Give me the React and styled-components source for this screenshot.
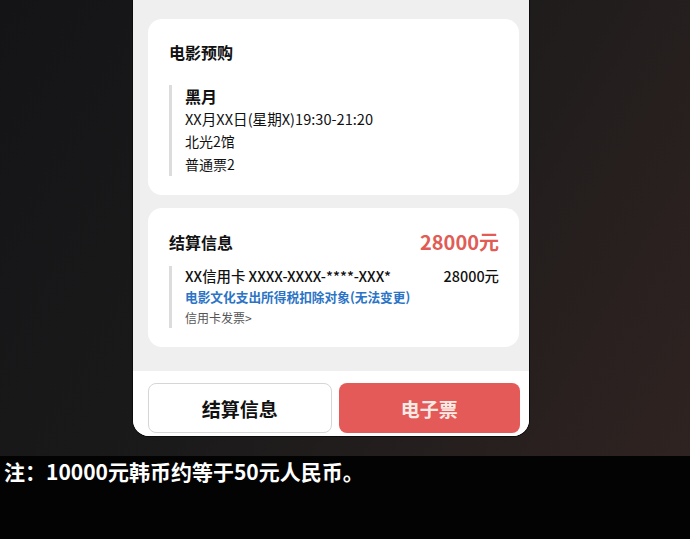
import React from "react";
import styled, { createGlobalStyle } from "styled-components";

const Global = createGlobalStyle`
  html, body { margin: 0; padding: 0; background: #000; }
  body { font-family: "Noto Sans CJK SC", "Noto Sans", sans-serif; }
`;

const Stage = styled.div`
  height: 456px;
  background: linear-gradient(120deg, #141416 0%, #1b1a1b 45%, #2f2321 100%);
  display: flex;
  overflow: hidden;
`;

const Phone = styled.div`
  width: 396px;
  height: 436px;
  margin-left: 133px;
  background: #efefef;
  border-radius: 0 0 16px 16px;
  display: flex;
  flex-direction: column;
  overflow: hidden;
  box-shadow: 0 0 0 1px #0c0c0c;
`;

const Content = styled.div`
  padding: 19px 10px 0 15px;
  display: flex;
  flex-direction: column;
  gap: 13px;
`;

const Card = styled.div`
  background: #fff;
  border-radius: 14px;
  height: ${(p) => p.$h}px;
  box-sizing: border-box;
  padding: ${(p) => p.$pt}px 20px 0 21px;
`;

const Title = styled.div`
  font-size: 16px;
  font-weight: 700;
  line-height: 22px;
  color: #111;
`;

const HeadRow = styled.div`
  display: flex;
  justify-content: space-between;
  align-items: center;
  height: 28px;
`;

const Price = styled.div`
  font-size: 20px;
  font-weight: 700;
  color: #e05c54;
  line-height: 28px;
`;

const Detail = styled.div`
  margin-top: ${(p) => p.$mt}px;
  border-left: 3px solid #dcdcdc;
  padding-left: 13px;
`;

const Line = styled.div`
  font-size: ${(p) => p.$size || 14}px;
  font-weight: ${(p) => p.$weight || 400};
  line-height: ${(p) => p.$lh || 23}px;
  color: ${(p) => p.$color || "#111"};
  display: flex;
  justify-content: space-between;
  white-space: nowrap;
`;

const Footer = styled.div`
  margin-top: auto;
  background: #fff;
  height: 65px;
  box-sizing: border-box;
  padding: 12px 9px 3px 15px;
  display: flex;
  gap: 7px;
`;

const Button = styled.button`
  flex: 1 1 0;
  min-width: 0;
  height: 50px;
  padding: 0;
  border-radius: 8px;
  font-family: inherit;
  font-size: 19px;
  font-weight: 700;
  border: ${(p) => (p.$primary ? "none" : "1px solid #d6d6d6")};
  background: ${(p) => (p.$primary ? "#e35a58" : "#fff")};
  color: ${(p) => (p.$primary ? "#fbe9e4" : "#111")};
`;

const Caption = styled.div`
  height: 83px;
  background: #030303;
  color: #fff;
  font-size: 21px;
  font-weight: 700;
  padding: 1px 0 0 4px;
  line-height: 28px;
  box-sizing: border-box;
`;

export default function App() {
  return (
    <>
      <Global />
      <Stage>
        <Phone>
          <Content>
            <Card $h={176} $pt={22}>
              <Title>电影预购</Title>
              <Detail $mt={22}>
                <Line $size={16} $weight={700} $lh={22}>黑月</Line>
                <Line $size={14.6}>XX月XX日(星期X)19:30-21:20</Line>
                <Line>北光2馆</Line>
                <Line>普通票2</Line>
              </Detail>
            </Card>
            <Card $h={139} $pt={20}>
              <HeadRow>
                <Title>结算信息</Title>
                <Price>28000元</Price>
              </HeadRow>
              <Detail $mt={10}>
                <Line $size={14.4} $weight={500} $lh={20}>
                  <span>XX信用卡 XXXX-XXXX-****-XXX*</span>
                  <span>28000元</span>
                </Line>
                <Line $size={12.7} $weight={600} $lh={22} $color="#2b74c6">
                  电影文化支出所得税扣除对象(无法变更)
                </Line>
                <Line $size={12} $lh={20} $color="#555">信用卡发票&gt;</Line>
              </Detail>
            </Card>
          </Content>
          <Footer>
            <Button>结算信息</Button>
            <Button $primary>电子票</Button>
          </Footer>
        </Phone>
      </Stage>
      <Caption>注：10000元韩币约等于50元人民币。</Caption>
    </>
  );
}
